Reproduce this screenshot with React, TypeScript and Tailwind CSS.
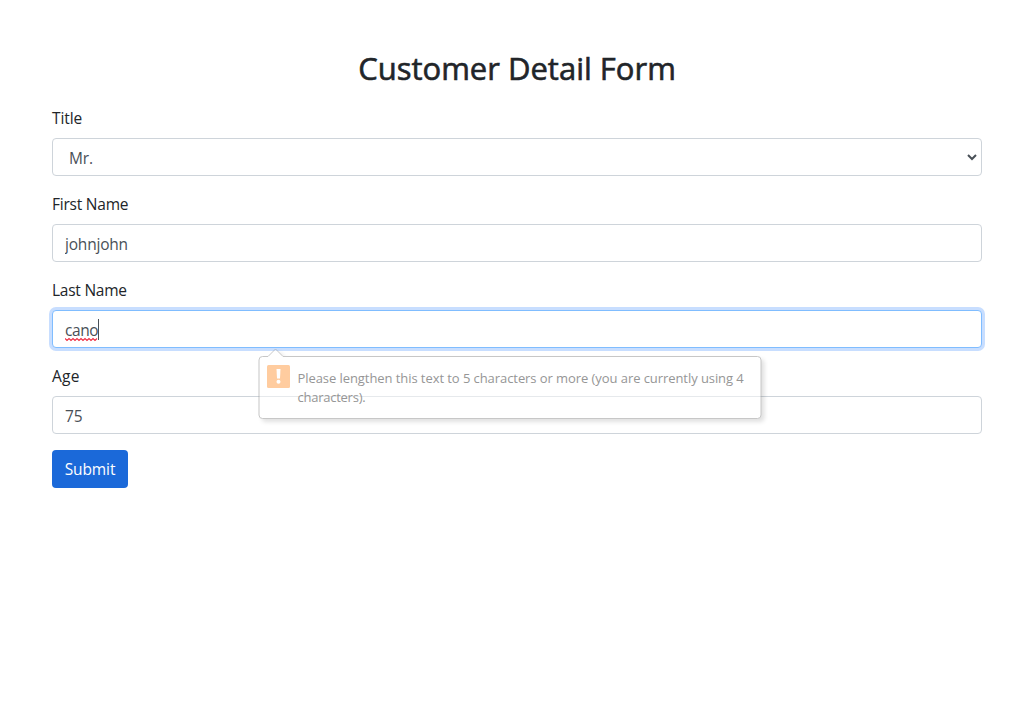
import type { ReactNode } from 'react';

const control =
  'block h-[38px] w-full rounded border border-[#ced4da] bg-white px-3 pt-[2px] text-[15.5px] leading-6 tracking-[-0.2px] text-[#495057] outline-none';

function Field({ label, labelClass, children }: { label: string; labelClass: string; children: ReactNode }) {
  return (
    <div className="mb-4 flex flex-col gap-2">
      <label className={`h-6 w-fit whitespace-nowrap text-[15.5px] leading-6 ${labelClass}`}>{label}</label>
      <div className="relative h-[38px]">{children}</div>
    </div>
  );
}

function ValidationBubble() {
  return (
    <div className="absolute left-[206px] top-[38px] z-10 h-[80px] w-[510px]">
      <svg className="absolute inset-0 opacity-50" width="510" height="80" viewBox="0 0 510 80" fill="none">
        <path
          d="M4.5 8.5H10L17.5 1L25 8.5H499.5Q503 8.5 503 12V67Q503 70.5 499.5 70.5H4.5Q1 70.5 1 67V12Q1 8.5 4.5 8.5Z"
          fill="white"
          stroke="#909090"
          className="drop-shadow-[3px_3px_2px_rgba(0,0,0,0.24)]"
        />
      </svg>
      <div className="relative flex pl-[9px] pt-[17px]">
        <svg width="23" height="23" viewBox="0 0 23 23" className="mr-[7px] shrink-0">
          <rect width="23" height="23" rx="1.5" fill="#ffcc9f" />
          <path d="M9.5 4h4l-.5 9.5h-3z" fill="white" />
          <circle cx="11.5" cy="16.7" r="2" fill="white" />
        </svg>
        <p className="pl-[0.5px] pt-[4px] text-[13px] leading-[19px] tracking-[-0.07px] text-[#969696]">
          <span className="block whitespace-nowrap">Please lengthen this text to 5 characters or more (you are currently using 4</span>
          <span className="block whitespace-nowrap tracking-[-0.25px]">characters).</span>
        </p>
      </div>
    </div>
  );
}

export default function App() {
  return (
    <main className="min-h-[702px] bg-white px-[52px] pt-[49px] font-['Open_Sans',sans-serif] text-[#212529]">
      <h1 className="mb-[19px] h-[38px] whitespace-nowrap text-center text-[31px] font-medium leading-[38px] [-webkit-text-stroke:0.6px_#212529]">
        Customer Detail Form
      </h1>
      <form>
        <Field label="Title" labelClass="tracking-[-0.1px]">
          <select className={`${control} appearance-none pl-4`} defaultValue="Mr.">
            <option>Mr.</option>
          </select>
          <svg className="absolute right-[4px] top-[15px]" width="12" height="9" viewBox="0 0 12 9" fill="none">
            <path d="M2 2L6 6L10 2" stroke="#495057" strokeWidth="2" />
          </svg>
        </Field>
        <Field label="First Name" labelClass="tracking-[-0.22px]">
          <input className={control} defaultValue="johnjohn" spellCheck={false} />
        </Field>
        <Field label="Last Name" labelClass="tracking-[-0.25px]">
          <div className="flex h-[38px] w-full rounded border border-[#80bdff] bg-white px-3 pt-[7px] text-[15.5px] leading-6 text-[#495057] shadow-[0_0_0_3px_#c8deff]">
            <span className="relative h-6 w-[33px] tracking-[-0.4px]">
              cano
              <svg className="absolute left-0 top-[19px]" width="33" height="5" viewBox="0 0 33 5" fill="none">
                <path
                  d="M0 1.5L2 3.5L4 1.5L6 3.5L8 1.5L10 3.5L12 1.5L14 3.5L16 1.5L18 3.5L20 1.5L22 3.5L24 1.5L26 3.5L28 1.5L30 3.5L32 1.5"
                  stroke="#ef2b40"
                  strokeWidth="1.1"
                />
              </svg>
            </span>
            <span className="mt-[1px] h-[21px] w-px bg-[#495057]" />
          </div>
          <ValidationBubble />
        </Field>
        <Field label="Age" labelClass="tracking-[0.3px]">
          <input className={control} defaultValue="75" />
        </Field>
        <button type="button" className="flex h-[38px] w-[76px] items-center justify-center rounded bg-[#1b69d9] text-[15.5px] leading-6 tracking-[-0.1px] text-white">
          Submit
        </button>
      </form>
    </main>
  );
}
